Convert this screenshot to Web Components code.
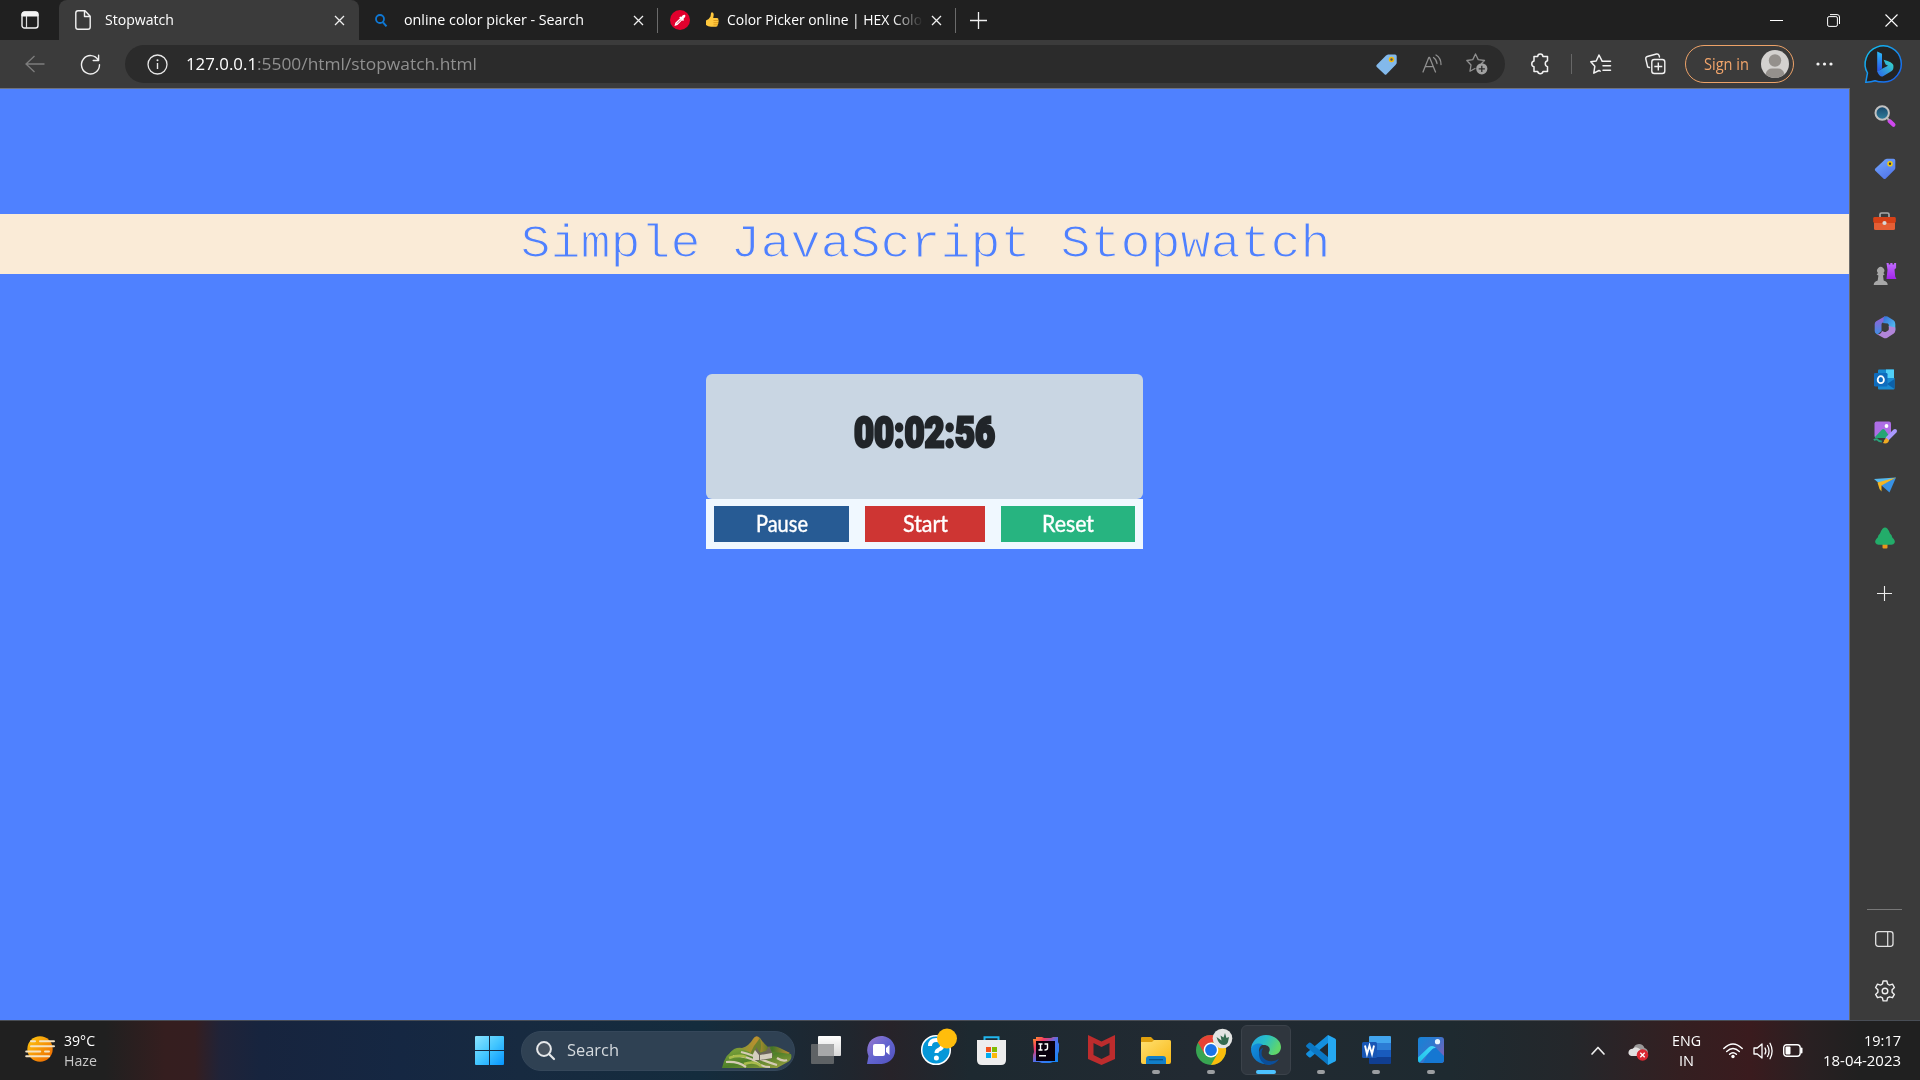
<!DOCTYPE html>
<html lang="en">
<head>
<meta charset="utf-8">
<title>Stopwatch</title>
<style>
html,body{margin:0;height:100%;overflow:hidden;background:#3b3b3b}
body{font-family:"Open Sans","Noto Sans",sans-serif}
</style>
</head>
<body>
<desktop-screen></desktop-screen>
<script>
const S='fill="none" stroke-linecap="round" stroke-linejoin="round"';
const icons={
workspace:[18,18,`<rect x="1" y="1" width="16" height="16" rx="2.5" fill="none" stroke="#f4f4f4" stroke-width="1.4"/><path d="M1 5V3.500Q1 1 3.500 1h11Q17 1 17 3.500V5z" fill="#f4f4f4" stroke="#f4f4f4"/><path d="M5.500 5v12" stroke="#ddd" stroke-width="1.2"/>`],
file:[16,20,`<path d="M3 .8h7l5.200 5.400V17Q15.200 19.200 13 19.200H3Q.8 19.200.8 17V3Q.8.8 3 .8zM9.500 1v5.500H15" ${S} stroke="#f2f2f2" stroke-width="1.4"/>`],
close:[11,11,`<path d="M1 1l9 9M10 1l-9 9" stroke="#efefef" stroke-width="1.300"/>`],
find:[12,13,`<circle cx="5" cy="5" r="4" fill="none" stroke="#0f78d4" stroke-width="1.800"/><path d="M8 8.300l3.500 4" stroke="#0f78d4" stroke-width="2"/>`],
picker:[20,20,`<circle cx="10" cy="10" r="10" fill="#e1002d"/><path d="M4.500 16l.8-3.200 4.700-4.600-.8-.8 1.200-1 .9.600c1.300-1.800 2.900-2.700 3.800-1.900.8.900 0 2.600-1.700 3.900l.6.900-1 1.200-.9-.8-4.600 4.700z" fill="#fff"/><path d="M7 13.500l3.800-3.800" stroke="#e1002d" stroke-width=".7"/>`],
thumb:[13,16,`<path d="M0 8.500Q3 7.500 4.500 4.500L5 1.200Q5.400 0 6.600.4 8 1 7.700 3L7.200 6H11Q12.800 6.200 12.400 8 13 9 12.400 10.200 12.600 11.500 11.800 12.400 11.700 14.500 10 14.800H5Q2 14.500 0 13z" fill="#ffc83d"/><path d="M7.500 8.500h4.500M7.500 10.700h4.500M7.500 12.800h4" stroke="#d28b12" stroke-width=".7"/>`],
plus:[17,17,`<path d="M8.500 0v17M0 8.500h17" stroke="#f0f0f0" stroke-width="1.300"/>`],
min:[13,13,`<path d="M0 6.500h13" stroke="#fff"/>`],
restore:[13,13,`<rect x=".6" y="2.600" width="9.800" height="9.800" rx="1.500" fill="none" stroke="#fff"/><path d="M3 .6h7Q12.500.6 12.500 3v7" fill="none" stroke="#fff"/>`],
wclose:[13,13,`<path d="M.5.500l12 12M12.500.5l-12 12" stroke="#fff" stroke-width="1.100"/>`],
back:[20,18,`<path d="M19.500 9H1M9.500 1L1 9l8.500 8" fill="none" stroke="#7d7d7d" stroke-width="1.300"/>`],
refresh:[21,21,`<path d="M18.200 6A9 9.200 0 1 0 19.500 10.700M18.600 1.200v5.300h-5.400" ${S} stroke="#f0f0f0" stroke-width="1.400"/>`],
info:[21,21,`<circle cx="10.500" cy="10.500" r="9.500" fill="none" stroke="#e8e8e8" stroke-width="1.300"/><path d="M10.500 9v6" stroke="#e8e8e8" stroke-width="1.400"/><circle cx="10.500" cy="6.300" r="1" fill="#e8e8e8"/>`],
ptag:[21,21,`<path d="M10 1.500L12 .5h7q1.700 0 1.700 1.700v7L19.500 11l-9 9.200q-1 1-2 0L.8 13q-1-1-.2-2z" fill="#83b9eb"/><circle cx="15.500" cy="5.500" r="2" fill="#47505c" stroke="#f2b90d" stroke-width="1.500"/>`],
read:[20,20,`<path d="M1 18L6.800 3.500h.8L13.500 18M3.300 12.700h7.800M11.500 3.500q3 2 3.500 6M14 1q5 3 5 9.500" ${S} stroke="#8f8f8f" stroke-width="1.300"/>`],
staradd:[22,22,`<path d="M9.500 1l2.700 5.600 6.300.9-3 3M9 15.500L4 18.200l1-6.200L.8 7.500l6-.9L9.500 1" ${S} stroke="#8f8f8f" stroke-width="1.300"/><circle cx="15.800" cy="15.800" r="5.600" fill="#a0a0a0"/><path d="M15.800 12.700v6.200M12.700 15.800h6.200" stroke="#2b2b2b" stroke-width="1.300"/>`],
puzzle:[20,22,`<path d="M4 3.500h3.700a2.600 2.600 0 0 1 5.200 0H17.500v4.300a3 3 0 0 0 0 5.800V18.500H13a2.700 2.700 0 0 1-5.300 0H4v-4.700a3 3 0 0 1 0-5.800z" ${S} stroke="#f2f2f2" stroke-width="1.500"/>`],
favs:[22,21,`<path d="M12 6.800L9 1 6.200 7 .8 7.700l4 4.600-1 6.900L9 16.500l1.200.6M12 7.200h8.500M13 11.700h7.500M13 16.200h7.500" ${S} stroke="#f2f2f2" stroke-width="1.500"/>`],
collect:[21,22,`<path d="M4.500 14.500L2.700 14 .8 6Q.5 4 2.300 3.500L11.500 1q2-.4 2.600 1.500l.4 1.500" ${S} stroke="#f2f2f2" stroke-width="1.400"/><rect x="6.800" y="6.500" width="13" height="14" rx="2.500" fill="none" stroke="#f2f2f2" stroke-width="1.400"/><path d="M13.300 9.500v8M9.300 13.500h8" stroke="#f2f2f2" stroke-width="1.400"/>`],
avatar:[28,28,`<circle cx="14" cy="14" r="14" fill="#d3d1cf"/><circle cx="14" cy="10.500" r="6.200" fill="#94908c"/><path d="M4.500 24.300Q6 18.500 11 18.500h6Q22 18.500 23.500 24.300A14 14 0 0 1 4.500 24.300" fill="#94908c"/>`],
dots:[17,4,`<circle cx="2" cy="2" r="1.600" fill="#f2f2f2"/><circle cx="8.500" cy="2" r="1.600" fill="#f2f2f2"/><circle cx="15" cy="2" r="1.600" fill="#f2f2f2"/>`],
bing:[38,38,`<defs><linearGradient id="b1" x1="0" y1="0" x2="1" y2="1"><stop stop-color="#12c6ef"/><stop offset="1" stop-color="#1859f0"/></linearGradient><linearGradient id="b2" x1="0" y1="0" x2="0" y2="1"><stop stop-color="#2bbcf8"/><stop offset="1" stop-color="#2a4fe8"/></linearGradient><linearGradient id="b3" x1="1" y1="0" x2="0" y2="1"><stop stop-color="#36e0c4"/><stop offset="1" stop-color="#2a62ee"/></linearGradient></defs><path d="M.8 37.200L2.500 28A18.100 18.100 0 1 1 19 37.100Q13 37 10 35.800 6 37.300.8 37.200z" fill="#232323" stroke="url(#b1)" stroke-width="1.500"/><path d="M12.200 6.500l4.800 2.300V23.500L12.200 27z" fill="url(#b2)"/><path d="M12.200 26.500L18 23.300l5-2.600-2.400-1.200-2-4.800q9 2.600 9.700 5.300.8 4.800-2 6.300L17.600 31.500q-3 .8-5.400-5z" fill="url(#b3)"/>`],
ssearch:[22,22,`<defs><linearGradient id="a" x1="0" y1="0" x2="0" y2="1"><stop stop-color="#17476b"/><stop offset="1" stop-color="#317f9d"/></linearGradient></defs><path d="M15.500 16l4 3.800" stroke="#cf48ee" stroke-width="4" stroke-linecap="round"/><path d="M12 12l3 3" stroke="#aaa" stroke-width="2"/><circle cx="8.200" cy="8" r="6.700" fill="url(#a)" stroke="#c2c2c2" stroke-width="2"/>`],
stag:[22,22,`<defs><linearGradient id="a" x1="0" y1="0" x2=".6" y2="1"><stop stop-color="#73a8ff"/><stop offset="1" stop-color="#5377ea"/></linearGradient></defs><path d="M11 1.500Q12 .7 13 .7h6.500q1.800 0 1.800 1.800V10q0 1-1 2l-8.500 8.500q-1.200 1-2.400 0L1.300 12.700q-1-1.200 0-2.200z" fill="url(#a)"/><circle cx="16" cy="5.800" r="2" fill="#333" stroke="#efc90d" stroke-width="1.600"/>`],
toolbox:[23,19,`<path d="M7 6V2.500Q7 1 8.500 1h6Q16 1 16 2.500V6" fill="none" stroke="#a9a9a9" stroke-width="1.700"/><rect x="1" y="9" width="21" height="9" rx="1.500" fill="#e55f35"/><rect x=".2" y="5" width="22.600" height="6" rx="1.400" fill="#d64117"/><circle cx="11.500" cy="11" r="2.100" fill="#d8d8d8"/>`],
chess:[24,24,`<defs><linearGradient id="a" x1="0" y1="0" x2="0" y2="1"><stop stop-color="#c06cff"/><stop offset="1" stop-color="#a324ea"/></linearGradient></defs><path d="M13.500 1h2.200v1.500h1.600V1h2.200v1.500h1.600V1h2v5l-1.600 1.500.7 7L23.500 17h-10l1-9z" fill="url(#a)"/><path d="M5 11a3.600 3.600 0 1 1 5.400 0l1.300 1.500-1.700 1 .7 5q4 1 4 4.500H.7q0-3.500 4-4.500l.7-5-1.800-1z" fill="#a7a7a7"/>`],
m365:[22,23,`<defs><linearGradient id="a" x1="0" y1="0" x2="0" y2="1"><stop stop-color="#9b5ed4"/><stop offset="1" stop-color="#3f8de3"/></linearGradient><linearGradient id="c" x1="0" y1="0" x2="1" y2="1"><stop stop-color="#326cd8"/><stop offset="1" stop-color="#59c9f3"/></linearGradient></defs><path d="M11 .3L2.200 5.300Q.7 6.300.7 8v7q0 2 1.800 3l1 .5L7.500 15V8.500q0-1.300 1.300-2L13 4z" fill="url(#a)"/><path d="M9.500 1.200q2-1.500 4-.6l6 3.700Q21.300 5.500 21.300 8v6.500L14.800 11V9.200q0-1-1-1.600L8.500 7q1-.6 1-2z" fill="url(#c)"/><path d="M21.300 11.500v3q0 2-1.500 3l-6.500 4.200q-2 1-4 0L2.500 18q4 1 5.500-3l2.500 1q.8.300 1.600-.2l2-1.300q.7-.5.7-1.500V10z" fill="#b185d9"/>`],
outlook:[21,21,`<rect x="4" y=".5" width="16" height="16" rx="1" fill="#1689d1"/><path d="M12 .5h8v9h-8z" fill="#50d0f7"/><path d="M4 9h16.500v10.500q0 1-1 1H5q-1 0-1-1z" fill="#198ad2"/><path d="M20.500 10v10L13 15z" fill="#0c61a9"/><rect x="0" y="4" width="13.500" height="13.500" rx="1.200" fill="#0f6cbd"/><ellipse cx="6.800" cy="10.700" rx="3.100" ry="3.500" fill="none" stroke="#fff" stroke-width="1.800"/>`],
paint:[24,23,`<rect x="1.500" y=".5" width="16.500" height="16.500" rx="2" fill="#ae6ee6"/><path d="M2 16L9 8.500q1.300-1 2.500 0l5.500 7.500-2 1H3z" fill="#25a575"/><circle cx="13.500" cy="5" r="1.900" fill="#fff"/><path d="M22 10L14.500 17.500" stroke="#aa9aff" stroke-width="4" stroke-linecap="round"/><path d="M13.500 17l2.600 2.600q-1.500 4-6.300 2.500 1.500-1 1.400-3z" fill="#f0aa21"/><path d="M.8 19q3-1.500 4 0t4 1.500" fill="none" stroke="#2aa47c" stroke-width="1.800"/>`],
send:[22,16,`<path d="M0 2L22 .5 7 8z" fill="#55b8ed"/><path d="M22 .5L7 8l8.500 7.500z" fill="#3892e5"/><path d="M3.500 5.500L22 .5 7.500 8.500v6L5.500 12z" fill="#f5b622"/>`],
tree:[22,22,`<rect x="8.500" y="15" width="5" height="6.500" rx="1" fill="#e9951b"/><path d="M8.500 1.700q2.500-2.400 5 0Q15 3.500 16 6.500q2 1.500 2.300 4 3.500 3.200 2.200 5.500-1 1.700-3 1.700h-13q-2 0-3-1.700-1.300-2.300 2.200-5.500.4-2.500 2.300-4 1-3 2.500-4.800z" fill="#23ac6a"/>`],
splus:[15,15,`<path d="M7.500 0v15M0 7.500h15" stroke="#eee" stroke-width="1.100"/>`],
panel:[19,16,`<rect x=".7" y=".7" width="17.300" height="14.600" rx="2.500" fill="none" stroke="#e2e2e2" stroke-width="1.300"/><path d="M12.700 1v14" stroke="#e2e2e2" stroke-width="1.200"/>`],
gear:[22,22,`<path d="M9.100 1h3.800l.7 3 1.900 1.100 3-.9 1.900 3.300-2.300 2.200v2.500l2.300 2.200-1.900 3.300-3-.9-1.900 1.100-.7 3H9.100l-.7-3-1.900-1.100-3 .9-1.900-3.300 2.300-2.200V9.700L1.600 7.500l1.900-3.300 3 .9L8.400 4z" ${S} stroke="#f0f0f0" stroke-width="1.400"/><circle cx="11" cy="11" r="2.800" fill="none" stroke="#f0f0f0" stroke-width="1.400"/>`],
haze:[31,26,`<defs><linearGradient id="a" x1="0" y1="0" x2="1" y2="1"><stop stop-color="#ffca10"/><stop offset="1" stop-color="#ed6300"/></linearGradient></defs><circle cx="15" cy="13" r="12.700" fill="url(#a)"/><path d="M6 5.200h4M15 5.200h14M6 10.200h23M1.200 15.500h14M20 15.500h4M1.200 20.300h23" stroke="#f5e3c2" stroke-width="2" stroke-linecap="round"/>`],
win:[29,29,`<defs><linearGradient id="a" x1="0" y1="0" x2="1" y2="1"><stop stop-color="#8be4ff"/><stop offset=".5" stop-color="#43c6ff"/><stop offset="1" stop-color="#0695ff"/></linearGradient></defs><path d="M1 0h13v14H0V1q0-1 1-1zM15 0h13q1 0 1 1v13H15zM0 15h14v14H1q-1 0-1-1zM15 15h14v13q0 1-1 1H15z" fill="url(#a)"/>`],
tsearch:[19,19,`<circle cx="8" cy="8" r="6.900" fill="#48535f" stroke="#e6e8ea" stroke-width="2"/><path d="M13 13l5 5" stroke="#e6e8ea" stroke-width="2.200" stroke-linecap="round"/>`],
hills:[70,32,`<defs><linearGradient id="a" x1="0" y1="0" x2="1" y2="1"><stop stop-color="#84a73c"/><stop offset=".5" stop-color="#4e8029"/><stop offset="1" stop-color="#a3a342"/></linearGradient><linearGradient id="c" x1="0" y1="0" x2="1" y2="0"><stop stop-color="#659b39"/><stop offset=".45" stop-color="#bd8f2e"/><stop offset=".7" stop-color="#417527"/><stop offset="1" stop-color="#bf8d32"/></linearGradient></defs><path d="M8 17Q12 11 20 12 27 10 31 3q3-5 7-1 4 6 8 9 7-2 12 1l10 5-18 12H12z" fill="url(#c)"/><path d="M38 2q2 8 0 15l-12 5 6-12z" fill="#6c802e"/><path d="M0 32Q3 17 13 14q10-2 17 4l14-3 25 3q2 6-5 9l-9 5z" fill="url(#a)"/><path d="M4 26q12-1 20 5M11 20q16 0 23 6 6 5 14 5M19 16q12 3 19 7 10 4 17 6M55 22q6 4 10 2" fill="none" stroke="#d5cbb4" stroke-width="2.200"/><path d="M7 22q10-4 17-1M22 28q10-4 17 2" fill="none" stroke="#a9bc4c" stroke-width="2.500"/><path d="M32 16l2-3v-2l4 6 6-2 3-5 4 9-2 4-15 2z" fill="#6c655a"/><path d="M31 18l2-4 4 5v5h-6zM38 19l12-2v5l-12 2z" fill="#d5cfbf"/>`],
taskview:[30,28,`<defs><linearGradient id="a" x1="0" y1="0" x2="0" y2="1"><stop stop-color="#fff"/><stop offset="1" stop-color="#d7d7d7"/></linearGradient></defs><rect x="7" y="0" width="23" height="20" rx="1" fill="url(#a)"/><rect x="0" y="8" width="23" height="20" rx="1" fill="#5e6265"/><path d="M7 8h15q1 0 1 1v11H7z" fill="#a7a8a9"/>`],
chat:[29,28,`<defs><linearGradient id="a" x1="0" y1="0" x2="1" y2="1"><stop stop-color="#9b79cf"/><stop offset=".5" stop-color="#6264cf"/><stop offset="1" stop-color="#5050bd"/></linearGradient></defs><path d="M0 28L1.500 20A14 14 0 1 1 14.500 28z" fill="url(#a)"/><rect x="6" y="8" width="12" height="12" rx="2" fill="#fff"/><path d="M19 12l3.500-3v10L19 16z" fill="#fff"/>`],
help:[37,37,`<circle cx="15" cy="22" r="14.300" fill="#0597d8" stroke="#fff" stroke-width="1.500"/><path d="M9 18q0-6 6.300-6 6.200 0 6.200 5 0 3-3.500 4.500-2.500 1-2.500 3.500" fill="none" stroke="#fff" stroke-width="4"/><circle cx="15.400" cy="30" r="2.500" fill="#fff"/><circle cx="26" cy="10.500" r="10" fill="#ffbd0c"/>`],
store:[29,29,`<path d="M7.500 6V1.200h14V6" fill="none" stroke="#20b7ee" stroke-width="2"/><path d="M0 4h29v20q0 5-5 5H5q-5 0-5-5z" fill="#ededed"/><path d="M9 11h5v5H9z" fill="#f1511b"/><path d="M15 11h5v5h-5z" fill="#80bb01"/><path d="M9 17h5v5H9z" fill="#00acee"/><path d="M15 17h5v5h-5z" fill="#fbb90a"/>`],
ij:[26,26,`<defs><linearGradient id="a" x1="0" y1="0" x2="1" y2="1"><stop stop-color="#ff9b23"/><stop offset=".25" stop-color="#f53b65"/><stop offset=".5" stop-color="#5070ed"/><stop offset="1" stop-color="#098bfa"/></linearGradient></defs><path d="M0 2h3V0h6l2 1h7l2-1h5v5l1 2v7l-1 3v8h-5l-3 1H9l-3-1H0v-7l1-3z" fill="url(#a)"/><path d="M3 4h19v20H3z" fill="#09000e"/><path d="M6 18.700h7M5.500 7h4M5.500 13h4M7.500 7v6M11.500 7h3v4q0 2-3 2" fill="none" stroke="#fff" stroke-width="1.400"/>`],
shield:[27,30,`<path d="M0 0l13.500 6.500L27 0v24l-13.500 6L0 24z" fill="#bd2c2d"/><path d="M5.500 8l8 4 8-4v12l-8 4-8-4z" fill="#232a31"/>`],
folder:[30,27,`<defs><linearGradient id="a" x1="0" y1="0" x2="1" y2="1"><stop stop-color="#ffe071"/><stop offset="1" stop-color="#f9b815"/></linearGradient></defs><path d="M0 1q0-1 1-1h9l3 3h15q2 0 2 2v5H0z" fill="#dfa00e"/><path d="M0 5h11l2-2h15q2 0 2 2v20q0 2-2 2H2q-2 0-2-2z" fill="url(#a)"/><path d="M5 27v-5q0-3 3-3h14q3 0 3 3v5z" fill="#117fc9"/><path d="M8 22.700h14" stroke="#09538a" stroke-width="1.300"/>`],
chrome:[37,37,`<circle cx="15" cy="22" r="15" fill="#38a552"/><path d="M2 14.500A15 15 0 0 1 28 14.500H15L8.500 25.700z" fill="#e84235"/><path d="M28 14.500A15 15 0 0 1 15 37L21.500 25.700 15 14.500z" fill="#fabd0c"/><circle cx="15" cy="22" r="7.400" fill="#fff"/><circle cx="15" cy="22" r="5.900" fill="#1a73e8"/><circle cx="26.500" cy="10.500" r="9.800" fill="#e3e4e3"/><path d="M20.500 9l5 3.500-1-5 3 2 1.500-4.500 1.500 5 2.500-1-1 5q-1 3-4 3-5 .500-7.500-8z" fill="#356b50"/>`],
edge:[30,30,`<defs><linearGradient id="a" x1="0" y1="0" x2="1" y2=".4"><stop stop-color="#25a2e8"/><stop offset=".5" stop-color="#28bfc6"/><stop offset="1" stop-color="#60d66a"/></linearGradient><linearGradient id="c" x1="0" y1="0" x2="1" y2="1"><stop stop-color="#1492e2"/><stop offset="1" stop-color="#0865b7"/></linearGradient></defs><path d="M0 14A15 15 0 0 1 15 0c9 0 15 6 15 12 0 5-4 8-8 8-3.500 0-5-1.500-4-3 2-3 0-7-5-7C7 10 2 11 0 14" fill="url(#a)"/><path d="M0 14C2 8 8 7.500 12 9.500q-5 2-4 9 1 8 10 10.500A15 15 0 0 1 0 14" fill="url(#c)"/><path d="M12 13q-4 8 3 12 6 3 13-1-4 6-11 6Q8 28 8 19q0-5 4-6" fill="#0b4e99"/>`],
vscode:[30,30,`<path d="M22 0l7 3.500q1 .5 1 1.500v20q0 1-1 1.500L22 30z" fill="#25a8f2"/><path d="M22 0v8L5 22q-1 1-2 .2L.5 20q-1-1 0-2z" fill="#1490df"/><path d="M22 30v-8L5 8q-1-1-2-.2L.5 10q-1 1 0 2z" fill="#0b78c5"/>`],
word:[29,28,`<path d="M8 0h20q1 0 1 1v6H7V1q0-1 1-1" fill="#42a5ee"/><path d="M7 7h22v7H7z" fill="#2c7cd5"/><path d="M7 14h22v7H7z" fill="#195bbd"/><path d="M7 21h22v6q0 1-1 1H8q-1 0-1-1z" fill="#103e91"/><rect x="0" y="6" width="15" height="16" rx="1.500" fill="#1856b5"/><path d="M3 9.500l2 8.500 2.500-8.500L10 18l2-8.500" fill="none" stroke="#fff" stroke-width="1.900"/>`],
photos:[26,26,`<defs><linearGradient id="a" x1="0" y1="0" x2="1" y2=".7"><stop stop-color="#1683d6"/><stop offset=".5" stop-color="#2f78cf"/><stop offset="1" stop-color="#7a62b8"/></linearGradient><linearGradient id="c" x1="0" y1="1" x2="1" y2="0"><stop stop-color="#1cc4ea"/><stop offset="1" stop-color="#45d8fa"/></linearGradient></defs><rect width="26" height="26" rx="3" fill="url(#a)"/><path d="M14 9q2 0 3.500 1.500L26 19v4q0 3-3 3H5z" fill="#1577d2"/><path d="M0 20.500L10.500 10.500q4-3 7.500.5-2-.5-3.800 1.300L1.500 25.500Q0 24.500 0 23z" fill="url(#c)"/><circle cx="19.500" cy="4.700" r="2.600" fill="#e9f6ff"/>`],
up:[14,9,`<path d="M1 8l6-6.500L13 8" ${S} stroke="#eee" stroke-width="1.700"/>`],
cloud:[21,18,`<path d="M5 7Q6 1 11 1q4 0 5.500 4 3.500 1 3.500 5l-9 3z" fill="#9b9999"/><path d="M3.500 13Q0 12 .5 9 1 6 4.500 5.700q3-3 7 0 3 2 2 7.300z" fill="#e1dfdf"/><circle cx="14.500" cy="12" r="5.800" fill="#da2832"/><path d="M12.300 9.800l4.400 4.400M16.700 9.800l-4.400 4.400" stroke="#fff" stroke-width="1.300"/>`],
wifi:[20,16,`<path d="M.8 5.500q9.200-9 18.400 0M3.700 8.500q6.300-6 12.600 0M6.600 11.300q3.400-3 6.800 0" ${S} stroke="#fff" stroke-width="1.500"/><circle cx="10" cy="13.500" r="1.700" fill="#fff"/>`],
volume:[20,18,`<path d="M1 6h3.300L9 2v14l-4.700-4H1zM12 6q1.700 3 0 6M14.500 3.500q3.200 5.500 0 11M17 1.200q4.200 7.800 0 15.600" ${S} stroke="#fff" stroke-width="1.300"/>`],
battery:[20,13,`<rect x=".7" y=".7" width="16.500" height="11.600" rx="3" fill="none" stroke="#fff" stroke-width="1.400"/><rect x="2.500" y="2.500" width="5" height="8" rx="1" fill="#fff"/><path d="M18.500 4.500v4" stroke="#fff" stroke-width="2" stroke-linecap="round"/>`]
};

function define(name, html, init){
  const tpl=document.createElement('template');
  tpl.innerHTML=html;
  customElements.define(name,class extends HTMLElement{
    constructor(){super();this.attachShadow({mode:'open'}).append(tpl.content.cloneNode(true));}
    connectedCallback(){if(init)init(this,this.shadowRoot);}
  });
}

define('ui-icon','',(el,root)=>{
  const [w,h,body]=icons[el.getAttribute('name')];
  root.innerHTML=`<style>:host{display:block;flex:none}svg{display:block;overflow:visible}</style><svg width="${w}" height="${h}" viewBox="0 0 ${w} ${h}">${body}</svg>`;
});

/* Text set to an exact advance width, given in px by the w attribute. */
define('fit-text','<style>:host{display:block;flex:none;white-space:nowrap}span{display:inline-block;transform-origin:0 50%}</style><span><slot></slot></span>',(el,root)=>{
  const w=+el.getAttribute('w'), s=root.querySelector('span');
  el.style.width=w+'px';
  s.style.transform=`scaleX(${w/s.getBoundingClientRect().width})`;
});

define('browser-tab',`<style>
:host{display:flex;align-items:center;box-sizing:border-box;height:40px;flex:none;color:#fff;font-size:14.500px;line-height:20px}
:host([active]){background:#3b3b3b;border-radius:8px 8px 0 0}
ui-icon{margin-left:auto}
</style><slot></slot><ui-icon name="close"></ui-icon>`);

define('tab-strip',`<style>
:host{display:flex;align-items:center;height:40px;background:#202020}
i{width:1px;height:25px;background:#6b6b6b;flex:none}
.fade{margin-left:8px;-webkit-mask-image:linear-gradient(90deg,#000 165px,transparent 196px)}
fit-text{margin-top:-1px}
</style>
<ui-icon name="workspace" style="margin-left:21px"></ui-icon>
<browser-tab active style="margin-left:20px;width:300px;padding:0 14px 0 16px"><ui-icon name="file"></ui-icon><fit-text w="69" style="margin-left:14px">Stopwatch</fit-text></browser-tab>
<browser-tab style="width:298px;padding:0 13px 0 16px"><ui-icon name="find"></ui-icon><fit-text w="180" style="margin-left:17px">online color picker - Search</fit-text></browser-tab>
<i></i>
<browser-tab style="width:297px;padding:0 13px 0 12px"><ui-icon name="picker"></ui-icon><ui-icon name="thumb" style="margin-left:16px"></ui-icon><fit-text class="fade" w="195">Color Picker online | HEX Colo</fit-text></browser-tab>
<i></i>
<ui-icon name="plus" style="margin-left:14px"></ui-icon>
<ui-icon name="min" style="margin-left:auto"></ui-icon>
<ui-icon name="restore" style="margin-left:44px"></ui-icon>
<ui-icon name="wclose" style="margin:0 22px 0 45px"></ui-icon>`);

define('tool-bar',`<style>
:host{display:flex;align-items:center;height:48px;background:#3b3b3b}
.url{display:flex;align-items:center;box-sizing:border-box;width:1380px;height:38px;border-radius:19px;background:#2b2b2b;margin-left:24px;padding:0 17px 0 22px;flex:none;font-size:17px;line-height:24px;color:#909090}
.host{color:#fff}
.sign{display:flex;align-items:center;justify-content:space-between;box-sizing:border-box;width:109px;height:38px;border:1.500px solid #eda268;border-radius:19px;margin-left:19px;padding:0 4px 0 18px;color:#f2a56b;font-size:15.500px;line-height:20px;flex:none}
.sign fit-text{margin-top:-1px}
i{width:1px;height:20px;background:#676767;margin-left:21px}
</style>
<ui-icon name="back" style="margin-left:25px"></ui-icon>
<ui-icon name="refresh" style="margin-left:35px"></ui-icon>
<div class="url"><ui-icon name="info"></ui-icon><fit-text class="host" w="71" style="margin-left:18px">127.0.0.1</fit-text><fit-text w="220">:5500/html/stopwatch.html</fit-text>
<ui-icon name="ptag" style="margin-left:auto"></ui-icon><ui-icon name="read" style="margin-left:25px"></ui-icon><ui-icon name="staradd" style="margin-left:24px"></ui-icon></div>
<ui-icon name="puzzle" style="margin-left:25px"></ui-icon><i></i>
<ui-icon name="favs" style="margin-left:18px"></ui-icon>
<ui-icon name="collect" style="margin-left:33px"></ui-icon>
<div class="sign"><fit-text w="45">Sign in</fit-text><ui-icon name="avatar"></ui-icon></div>
<ui-icon name="dots" style="margin-left:22px"></ui-icon>
<ui-icon name="bing" style="margin-left:32px"></ui-icon>`);

define('watch-button',`<style>
:host{display:flex;align-items:center;justify-content:center;height:36px;color:#fff;font:22.500px/36px Lato,"Open Sans",sans-serif;-webkit-text-stroke:.4px #fff;flex:none}
</style><slot></slot>`);

define('stop-watch',`<style>
:host{display:block;width:437px}
.face{display:flex;justify-content:center;height:125px;border-radius:6px;background:#c9d6e3;color:#212529}
.face fit-text{margin-top:28px;font:900 43px/60px Roboto,"Open Sans",sans-serif;-webkit-text-stroke:2.800px #212529}
.keys{display:flex;align-items:center;justify-content:space-between;height:50px;padding:0 8px;background:#f0f8ff}
</style>
<div class="face"><fit-text w="141">00:02:56</fit-text></div>
<div class="keys">
<watch-button style="width:135px;background:#275b94"><fit-text w="52">Pause</fit-text></watch-button>
<watch-button style="width:120px;background:#ce3533"><fit-text w="45">Start</fit-text></watch-button>
<watch-button style="width:134px;background:#27b480"><fit-text w="52">Reset</fit-text></watch-button>
</div>`);

define('web-page',`<style>
:host{display:flex;flex-direction:column;align-items:center;box-sizing:border-box;width:1850px;height:932px;background:#4f81ff;border-top:1px solid #6d7280;border-right:1px solid #6b6b6b}
header{width:100%;height:60px;margin:125px 0 100px;background:#faebd7}
h1{margin:0;color:#4f81ff;text-align:center;font:400 50px/60px "Liberation Mono","Courier New",monospace;-webkit-text-stroke:1.300px #faebd7;transform:translate(1px,1px) scaleY(.93)}
</style><header><h1>Simple JavaScript Stopwatch</h1></header><stop-watch></stop-watch>`);

define('side-bar',`<style>
:host{display:flex;flex-direction:column;align-items:center;box-sizing:border-box;width:70px;height:932px;padding-right:1px;background:#3b3b3b}
.apps{display:grid;grid-auto-rows:52.700px;place-items:center;margin-top:2px}
.foot{display:flex;flex-direction:column;align-items:center;margin-top:auto}
hr{width:35px;height:1px;border:0;background:#787878;margin:0 0 21px}
</style>
<div class="apps"><ui-icon name="ssearch"></ui-icon><ui-icon name="stag"></ui-icon><ui-icon name="toolbox"></ui-icon><ui-icon name="chess"></ui-icon><ui-icon name="m365"></ui-icon><ui-icon name="outlook"></ui-icon><ui-icon name="paint"></ui-icon><ui-icon name="send"></ui-icon><ui-icon name="tree"></ui-icon></div>
<ui-icon name="splus" style="margin-top:22px"></ui-icon>
<div class="foot"><hr><ui-icon name="panel"></ui-icon><ui-icon name="gear" style="margin:33px 0 18px"></ui-icon></div>`);

define('task-item',`<style>
:host{display:flex;flex-direction:column;align-items:center;justify-content:center;box-sizing:border-box;width:50px;height:50px;flex:none;position:relative;border-radius:6px}
:host([on]){background:#2f363e;border:1px solid #3b424a}
b{display:none;position:absolute;bottom:1px;width:8px;height:4px;border-radius:2px;background:#9b9ea1}
:host([run]) b{display:block}
:host([on]) b{display:block;bottom:0;width:20px;background:#4cc2ff}
</style><slot></slot><b></b>`);

define('task-bar',`<style>
:host{display:flex;align-items:center;box-sizing:border-box;height:60px;border-top:1px solid #484d55;color:#fff;font-size:15px;line-height:20px;
background:linear-gradient(90deg,#202020 0,#202020 105px,#351e1f 165px,#351e20 195px,#202338 220px,#17243e 260px,#152742 400px,#172a40 520px,#142c3d 700px,#20262e 850px,#272329 890px,#1d2930 970px,#222a32 1200px,#1e2a30 1450px,#24272b 1570px,#341f21 1680px,#3a1b1e 1750px,#292022 1810px,#202020 1860px)}
.two{display:flex;flex-direction:column;flex:none;padding-bottom:2px}
.search{display:flex;align-items:center;box-sizing:border-box;width:274px;height:40px;border-radius:20px;background:#2f4153;border:1px solid #35475a;margin-left:17px;padding:0 2px 0 14px;font-size:17px;color:#d5dade;flex:none}
.apps{display:flex;gap:5px;margin:-1px 0 0 6px}
</style>
<ui-icon name="haze" style="margin:-4px 0 0 25px"></ui-icon>
<div class="two" style="margin-left:8px"><fit-text w="31">39°C</fit-text><fit-text w="33" style="color:#c9c9c9">Haze</fit-text></div>
<ui-icon name="win" style="margin-left:378px"></ui-icon>
<div class="search"><ui-icon name="tsearch"></ui-icon><fit-text w="52" style="margin:-1px 0 0 12px">Search</fit-text><ui-icon name="hills" style="margin:3px 0 0 auto"></ui-icon></div>
<div class="apps">
<task-item><ui-icon name="taskview"></ui-icon></task-item>
<task-item><ui-icon name="chat"></ui-icon></task-item>
<task-item><ui-icon name="help" style="margin:-7px 0 0 7px"></ui-icon></task-item>
<task-item><ui-icon name="store"></ui-icon></task-item>
<task-item><ui-icon name="ij"></ui-icon></task-item>
<task-item><ui-icon name="shield"></ui-icon></task-item>
<task-item run><ui-icon name="folder"></ui-icon></task-item>
<task-item run><ui-icon name="chrome" style="margin:-7px 0 0 7px"></ui-icon></task-item>
<task-item on><ui-icon name="edge"></ui-icon></task-item>
<task-item run><ui-icon name="vscode"></ui-icon></task-item>
<task-item run><ui-icon name="word"></ui-icon></task-item>
<task-item run><ui-icon name="photos"></ui-icon></task-item>
</div>
<ui-icon name="up" style="margin-left:auto"></ui-icon>
<ui-icon name="cloud" style="margin:2px 0 0 23px"></ui-icon>
<div class="two" style="align-items:center;margin-left:23px"><fit-text w="29">ENG</fit-text><fit-text w="15">IN</fit-text></div>
<ui-icon name="wifi" style="margin-left:22px"></ui-icon>
<ui-icon name="volume" style="margin-left:10px"></ui-icon>
<ui-icon name="battery" style="margin-left:10px"></ui-icon>
<div class="two" style="align-items:flex-end;margin:0 19px 0 20px"><fit-text w="37">19:17</fit-text><fit-text w="78">18-04-2023</fit-text></div>`);

define('desktop-screen',`<style>
:host{display:flex;flex-direction:column;width:1920px;height:1080px;overflow:hidden}
.body{display:flex}
</style><tab-strip></tab-strip><tool-bar></tool-bar><div class="body"><web-page></web-page><side-bar></side-bar></div><task-bar></task-bar>`);
</script>
</body>
</html>
